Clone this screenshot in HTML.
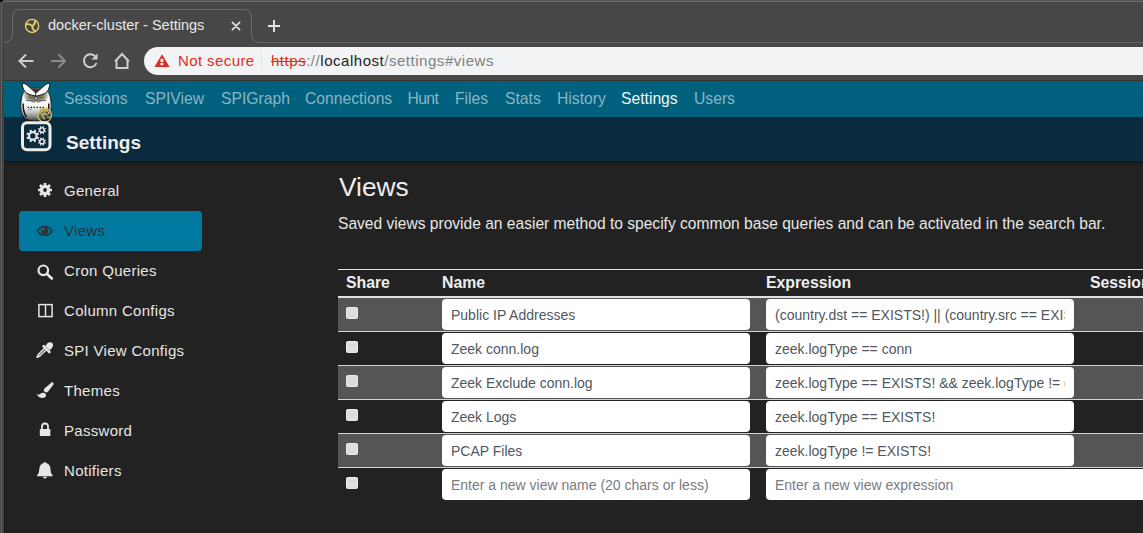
<!DOCTYPE html>
<html><head><meta charset="utf-8">
<style>
*{box-sizing:border-box}
html,body{margin:0;padding:0;width:1143px;height:533px;overflow:hidden;background:#222;font-family:"Liberation Sans",sans-serif}
.a{position:absolute}
#chrome{left:0;top:0;width:1143px;height:81px;background:#474747}
#page{left:4px;top:81px;width:1139px;height:452px;background:#222}
.nav{top:89.5px;font-size:15.7px;color:#8ab5c3;line-height:18px;white-space:nowrap}
.side{font-size:15px;letter-spacing:0.3px;color:#e6e6e6;line-height:17px;white-space:nowrap}
.th{top:274.4px;font-size:15.8px;font-weight:bold;color:#eee;line-height:18px;white-space:nowrap}
.row{left:338px;width:805px;height:33px}
.inp{background:#fff;border-radius:4px;height:31px;font-size:14px;color:#50575e;line-height:33.5px;padding-left:9px;white-space:nowrap;overflow:hidden}
.cb{width:12px;height:12px;background:#dddddd;border:1px solid #ebebeb;border-radius:1.5px;left:346px}
.ct{font-size:14px;white-space:nowrap;line-height:16px}
</style></head><body>
<div id="chrome" class="a">
  <!-- frame borders -->
  <div class="a" style="left:0;top:0;width:1143px;height:1px;background:#555"></div>
  <div class="a" style="left:3px;top:1px;width:1140px;height:1px;background:#6a6a6a"></div>
  <div class="a" style="left:0;top:0;width:3px;height:1px;background:#000"></div>
  <div class="a" style="left:0;top:0;width:1px;height:3px;background:#000"></div>
  <div class="a" style="left:1px;top:1px;width:1px;height:1px;background:#222"></div>
  <div class="a" style="left:2px;top:1px;width:1px;height:1px;background:#4a4a4a"></div>
  <div class="a" style="left:2px;top:2px;width:1px;height:1px;background:#5e5e5e"></div>
  <!-- tab strip bottom separator -->
  <div class="a" style="left:259px;top:42px;width:884px;height:1px;background:#666"></div>
  <!-- active tab -->
  <svg class="a" style="left:0;top:0" width="300" height="44">
    <path d="M4 42.5 Q12.5 42 12.5 34 L12.5 17 Q12.5 9.5 20 9.5 L243.5 9.5 Q251.5 9.5 251.5 17 L251.5 34 Q251.5 42 259.5 42.5" fill="#474747" stroke="#6b6b6b" stroke-width="1"/>
    <rect x="13" y="41" width="238" height="3" fill="#474747"/>
    <!-- favicon -->
    <g transform="translate(32.1,25.9)" fill="none" stroke="#e3d168" stroke-width="1.3">
      <circle r="6.6"/>
      <path d="M0 0.3 Q2.8 -1.2 3.2 -5.8 M-0.3 0 Q-2.4 -2.6 -6.2 -1.4 M0.2 0.2 Q0 3.6 3.6 5.4" stroke-width="1.9"/>
    </g>
    <!-- close x -->
    <path d="M232.4 22.4 L239.6 29.6 M239.6 22.4 L232.4 29.6" stroke="#dcdcdc" stroke-width="1.8" stroke-linecap="round"/>
    <!-- plus -->
    <path d="M274 20 V32 M268 26 H280" stroke="#e4e4e4" stroke-width="1.9"/>
  </svg>
  <div class="a" style="left:48px;top:17px;font-size:14.5px;color:#e8e8e8;line-height:17px;white-space:nowrap">docker-cluster - Settings</div>
  <!-- toolbar icons -->
  <svg class="a" style="left:0;top:43px" width="145" height="37">
    <g fill="none" stroke-width="2" stroke-linecap="butt">
      <path d="M33.5 18 H20 M26 11.5 L19.5 18 L26 24.5" stroke="#cfcfcf"/>
      <path d="M51 18 H64.5 M58.5 11.5 L65 18 L58.5 24.5" stroke="#8c8c8c"/>
      <path d="M95.8 14 A6.5 6.5 0 1 0 96.5 20" stroke="#cfcfcf"/>
      <path d="M97.5 10.5 V16.5 H91.5 Z" fill="#cfcfcf" stroke="none"/>
      <path d="M115 18.5 L122 11 L129 18.5 M116.5 17 V25 H127.5 V17" stroke="#cfcfcf"/>
    </g>
  </svg>
  <!-- url bar -->
  <div class="a" style="left:144px;top:47px;width:1100px;height:28px;background:#f1f3f4;border-radius:14px"></div>
  <svg class="a" style="left:150px;top:50px" width="30" height="22">
    <path d="M12 4.3 L19.6 17 H4.4 Z" fill="#d93025"/>
    <rect x="10.6" y="8.8" width="2.7" height="3.2" fill="#fff"/>
    <rect x="10.6" y="12.9" width="2.7" height="2.3" fill="#fff"/>
  </svg>
  <div class="a ct" style="left:178px;top:53px;color:#d93025;font-size:15px;letter-spacing:0.4px">Not secure</div>
  <div class="a" style="left:261px;top:54px;width:1px;height:15px;background:#dfe1e3"></div>
  <div class="a ct" style="left:271px;top:53px;font-size:15px;color:#7d8185;letter-spacing:0.53px"><span style="color:#d93025;text-decoration:line-through">https</span>://<span style="color:#202124">localhost</span>/settings#views</div>
  <!-- bottom dark line and left frame -->
  <div class="a" style="left:3px;top:80px;width:1140px;height:1px;background:#37332f"></div>
</div>
<!-- left frame border full height -->
<div class="a" style="left:0;top:2px;width:1px;height:531px;background:#4a4a4a"></div>
<div class="a" style="left:1px;top:3px;width:1px;height:530px;background:#606060"></div>
<div class="a" style="left:2px;top:43px;width:2px;height:490px;background:#414141"></div>
<div class="a" style="left:3px;top:81px;width:1px;height:452px;background:#444"></div>
<div class="a" style="left:4px;top:162px;width:1px;height:371px;background:#1c1c1c"></div>

<!-- nav bar -->
<div class="a" style="left:4px;top:81px;width:1139px;height:36px;background:#00607e"></div>
<div class="a" style="left:4px;top:117px;width:1139px;height:44px;background:#0a2a3e"></div>
<div class="a" style="left:4px;top:161px;width:1139px;height:6px;background:linear-gradient(#141414,#1a1a1a 30%,#202020 75%,#222)"></div>

<div class="a nav" style="left:64px">Sessions</div>
<div class="a nav" style="left:145px">SPIView</div>
<div class="a nav" style="left:221px">SPIGraph</div>
<div class="a nav" style="left:305px">Connections</div>
<div class="a nav" style="left:407.5px;letter-spacing:-0.6px">Hunt</div>
<div class="a nav" style="left:455px">Files</div>
<div class="a nav" style="left:505px">Stats</div>
<div class="a nav" style="left:557px">History</div>
<div class="a nav" style="left:621px;color:#eef4f6">Settings</div>
<div class="a nav" style="left:694px">Users</div>

<!-- owl logo -->
<svg class="a" style="left:16px;top:80px" width="40" height="45" viewBox="0 0 40 45">
  <defs>
    <linearGradient id="og" x1="0" y1="10" x2="0" y2="42" gradientUnits="userSpaceOnUse">
      <stop offset="0" stop-color="#ffffff"/><stop offset="0.5" stop-color="#f8f8f8"/><stop offset="0.7" stop-color="#c4c4c4"/><stop offset="0.88" stop-color="#707070"/><stop offset="1" stop-color="#222"/>
    </linearGradient>
    <radialGradient id="fg" cx="20" cy="14" r="13" gradientUnits="userSpaceOnUse">
      <stop offset="0" stop-color="#505050"/><stop offset="0.6" stop-color="#8a8a8a"/><stop offset="0.85" stop-color="#a0a0a0" stop-opacity="0.7"/><stop offset="1" stop-color="#bbb" stop-opacity="0"/>
    </radialGradient>
  </defs>
  <path d="M20 8 Q32 8 34 16 Q36.5 27 34 34 Q31 41.5 20 42 Q9 41.5 6 34 Q3.5 27 6 16 Q8 8 20 8 Z" fill="url(#og)" stroke="#151515" stroke-width="0.9"/>
  <path d="M8 10 Q20 6 32 10 Q34 15 33 19 Q27 21.5 20 22 Q13 21.5 7 19 Q6 15 8 10 Z" fill="url(#fg)"/>
  <path d="M9 9.5 Q20 7 31 9.5 L20 14 Z" fill="#3a3a3a"/>
  <path d="M7.2 23.5 Q6.5 31 10.5 37" stroke="#111" stroke-width="1.5" fill="none"/>
  <path d="M32.8 23.5 Q33.5 31 29.5 37" stroke="#111" stroke-width="1.5" fill="none"/>
  <path d="M6 3 Q9 3.5 11 5 L20.8 13.8 L20 16.2 Q14 15 10.5 13 Q7 11 6 3 Z" fill="#fbfbfb" stroke="#111" stroke-width="0.9" stroke-linejoin="round"/>
  <path d="M34 3 Q31 3.5 29 5 L19.2 13.8 L20 16.2 Q26 15 29.5 13 Q33 11 34 3 Z" fill="#fbfbfb" stroke="#111" stroke-width="0.9" stroke-linejoin="round"/>
  <ellipse cx="14.4" cy="16.3" rx="1.7" ry="1.3" fill="#a29c1c" stroke="#222" stroke-width="0.5"/>
  <ellipse cx="25.9" cy="16.3" rx="1.7" ry="1.3" fill="#a29c1c" stroke="#222" stroke-width="0.5"/>
  <ellipse cx="20" cy="18.5" rx="1.1" ry="1.9" fill="#fff" stroke="#111" stroke-width="0.7"/>
  <path d="M10 20.5 Q15 20 18.5 22.5 M21.5 22.5 Q25 20 30 20.5" stroke="#444" stroke-width="0.8" fill="none"/>
  <path d="M11.5 27.4 H28.5" stroke="#222" stroke-width="1.3" stroke-dasharray="1.5 1.5" fill="none"/>
  <path d="M12 30 L16 29 M24 29 L28 30" stroke="#777" stroke-width="0.7" fill="none"/>
  <path d="M11.5 40 Q20 43.5 28.5 40" stroke="#111" stroke-width="1.8" fill="none"/>
  <circle cx="28.6" cy="35.3" r="6.8" fill="rgba(40,50,45,0.45)" stroke="#d8c466" stroke-width="1.3"/>
  <path d="M23.5 34 Q25 30.5 29 30.3 Q32 30.8 33 33 Q31 33.5 30.5 35 Q28 33 26 34.5 Q27 37.5 29 39.5 M31 37 Q33 38 34.5 36.5" stroke="#d3c060" stroke-width="1.1" fill="none"/>
</svg>
<!-- settings icon -->
<svg class="a" style="left:20px;top:121px" width="32" height="31" viewBox="0 0 32 31">
  <rect x="2.5" y="1.7" width="27.5" height="27" rx="4.5" fill="#0a2a3e" stroke="#ecebe8" stroke-width="3"/>
  <path fill-rule="evenodd" fill="#e8e6e2" d="M17.60 14.90 L17.53 15.74 L19.21 16.47 L18.44 18.33 L16.74 17.64 L16.19 18.29 L15.54 18.84 L16.23 20.54 L14.37 21.31 L13.64 19.63 L12.80 19.70 L11.96 19.63 L11.23 21.31 L9.37 20.54 L10.06 18.84 L9.41 18.29 L8.86 17.64 L7.16 18.33 L6.39 16.47 L8.07 15.74 L8.00 14.90 L8.07 14.06 L6.39 13.33 L7.16 11.47 L8.86 12.16 L9.41 11.51 L10.06 10.96 L9.37 9.26 L11.23 8.49 L11.96 10.17 L12.80 10.10 L13.64 10.17 L14.37 8.49 L16.23 9.26 L15.54 10.96 L16.19 11.51 L16.74 12.16 L18.44 11.47 L19.21 13.33 L17.53 14.06 Z M15.50 14.90 A2.70 2.70 0 1 0 10.10 14.90 A2.70 2.70 0 1 0 15.50 14.90 Z"/>
  <path fill-rule="evenodd" fill="#e8e6e2" d="M25.00 9.10 L24.95 9.63 L26.08 10.10 L25.59 11.28 L24.46 10.82 L24.12 11.22 L23.72 11.56 L24.18 12.69 L23.00 13.18 L22.53 12.05 L22.00 12.10 L21.47 12.05 L21.00 13.18 L19.82 12.69 L20.28 11.56 L19.88 11.22 L19.54 10.82 L18.41 11.28 L17.92 10.10 L19.05 9.63 L19.00 9.10 L19.05 8.57 L17.92 8.10 L18.41 6.92 L19.54 7.38 L19.88 6.98 L20.28 6.64 L19.82 5.51 L21.00 5.02 L21.47 6.15 L22.00 6.10 L22.53 6.15 L23.00 5.02 L24.18 5.51 L23.72 6.64 L24.12 6.98 L24.46 7.38 L25.59 6.92 L26.08 8.10 L24.95 8.57 Z M23.50 9.10 A1.50 1.50 0 1 0 20.50 9.10 A1.50 1.50 0 1 0 23.50 9.10 Z"/>
  <path fill-rule="evenodd" fill="#e8e6e2" d="M25.00 20.60 L24.95 21.13 L26.08 21.60 L25.59 22.78 L24.46 22.32 L24.12 22.72 L23.72 23.06 L24.18 24.19 L23.00 24.68 L22.53 23.55 L22.00 23.60 L21.47 23.55 L21.00 24.68 L19.82 24.19 L20.28 23.06 L19.88 22.72 L19.54 22.32 L18.41 22.78 L17.92 21.60 L19.05 21.13 L19.00 20.60 L19.05 20.07 L17.92 19.60 L18.41 18.42 L19.54 18.88 L19.88 18.48 L20.28 18.14 L19.82 17.01 L21.00 16.52 L21.47 17.65 L22.00 17.60 L22.53 17.65 L23.00 16.52 L24.18 17.01 L23.72 18.14 L24.12 18.48 L24.46 18.88 L25.59 18.42 L26.08 19.60 L24.95 20.07 Z M23.50 20.60 A1.50 1.50 0 1 0 20.50 20.60 A1.50 1.50 0 1 0 23.50 20.60 Z"/>
</svg>
<div class="a" style="left:66px;top:132px;font-size:19px;font-weight:bold;color:#eee;line-height:21px">Settings</div>

<!-- sidebar -->
<div class="a" style="left:19px;top:211px;width:183px;height:40px;background:#0079a0;border-radius:4px"></div>
<div class="a side" style="left:64px;top:182px">General</div>
<div class="a side" style="left:64px;top:222px;color:#2e3338">Views</div>
<div class="a side" style="left:64px;top:262px">Cron Queries</div>
<div class="a side" style="left:64px;top:302px">Column Configs</div>
<div class="a side" style="left:64px;top:342px">SPI View Configs</div>
<div class="a side" style="left:64px;top:382px">Themes</div>
<div class="a side" style="left:64px;top:422px">Password</div>
<div class="a side" style="left:64px;top:462px">Notifiers</div>

<svg class="a" style="left:30px;top:176px" width="30" height="310" viewBox="0 0 30 310">
  <!-- gear -->
  <g transform="translate(15,14)" fill="#e6e6e6">
    <circle r="5.2"/>
    <g stroke="#e6e6e6" stroke-width="2.6">
      <path d="M0 -7 V7 M-7 0 H7 M-5 -5 L5 5 M5 -5 L-5 5"/>
    </g>
    <circle r="1.9" fill="#222"/>
  </g>
  <!-- eye -->
  <g transform="translate(14.8,54.8)">
    <path d="M-7.2 0 C-4.5 -5.6 4.5 -5.6 7.2 0 C4.5 5.6 -4.5 5.6 -7.2 0 Z" fill="none" stroke="#2e3338" stroke-width="1.7"/>
    <circle r="3.5" fill="#2e3338"/>
    <circle cx="-1.5" cy="-1.6" r="1.2" fill="#2d6c86"/>
  </g>
  <!-- search -->
  <g transform="translate(0,80)" fill="none" stroke="#e6e6e6" stroke-width="2.2">
    <circle cx="13.3" cy="14.3" r="4.8"/>
    <path d="M16.8 17.8 L21.8 22.5" stroke-width="2.6" stroke-linecap="round"/>
  </g>
  <!-- columns -->
  <g transform="translate(0,120)" fill="none" stroke="#e6e6e6" stroke-width="1.5">
    <rect x="8.9" y="8.6" width="13.2" height="12"/>
    <path d="M15.5 8.6 V20.6"/>
  </g>
  <!-- eyedropper -->
  <g transform="translate(0,160)">
    <path d="M15.2 11.6 L8.4 18.5 L7 21.4 L9.9 20 L16.8 13.2" fill="none" stroke="#e6e6e6" stroke-width="1.5" stroke-linejoin="round"/>
    <circle cx="20" cy="9.3" r="3" fill="#e6e6e6"/>
    <path d="M13.6 10.2 L19.4 16" stroke="#e6e6e6" stroke-width="2.6" stroke-linecap="round"/>
    <path d="M16.5 8.5 L21 13" stroke="#e6e6e6" stroke-width="3.5"/>
  </g>
  <!-- brush -->
  <g transform="translate(0,200)" fill="#e6e6e6">
    <path d="M22.2 5.9 Q24.2 6.3 23.4 8.4 L18.2 15.4 Q16.6 17.1 14.7 16 Q13.1 14.6 14.2 12.8 Z"/>
    <path d="M6.6 17 Q7.4 19.2 9.4 18.6 Q11.2 16.4 13.5 16.7 Q16.4 17.3 16 20 Q15.3 22.1 12 22 Q7.8 21.8 6.6 17 Z"/>
  </g>
  <!-- lock -->
  <g transform="translate(0,240)">
    <path d="M12 13 V10.5 Q12 7.5 15 7.5 Q18 7.5 18 10.5 V13" fill="none" stroke="#e6e6e6" stroke-width="1.8"/>
    <rect x="9.8" y="13" width="10.6" height="7" rx="0.8" fill="#e6e6e6"/>
  </g>
  <!-- bell -->
  <g transform="translate(0,280)" fill="#e6e6e6">
    <path d="M14.9 6 Q15.8 6 16 7 Q20.5 8.2 20.5 13.5 Q20.5 17.3 22.6 19.2 L22.6 20.3 H7.1 L7.1 19.2 Q9.3 17.3 9.3 13.5 Q9.3 8.2 13.8 7 Q14 6 14.9 6Z"/>
    <path d="M12.8 20.8 Q13 22.6 14.9 22.6 Q16.8 22.6 17 20.8Z"/>
  </g>
</svg>

<!-- content -->
<div class="a" style="left:339px;top:172px;font-size:26.3px;color:#eee;line-height:30px">Views</div>
<div class="a" style="left:338px;top:214.5px;font-size:15.58px;color:#e6e6e6;line-height:18px;white-space:nowrap">Saved views provide an easier method to specify common base queries and can be activated in the search bar.</div>

<!-- table -->
<div class="a" style="left:338px;top:269px;width:805px;height:1px;background:#dee2e6"></div>
<div class="a th" style="left:346px">Share</div>
<div class="a th" style="left:442px">Name</div>
<div class="a th" style="left:766px">Expression</div>
<div class="a th" style="left:1090px">Sessions</div>
<div class="a" style="left:338px;top:296px;width:805px;height:2px;background:#dee2e6"></div>

<div class="a row" style="top:298px;background:#555"></div>
<div class="a" style="left:338px;top:331px;width:805px;height:1px;background:#d0d3d6"></div>
<div class="a row" style="top:332px"></div>
<div class="a" style="left:338px;top:365px;width:805px;height:1px;background:#d0d3d6"></div>
<div class="a row" style="top:366px;background:#555"></div>
<div class="a" style="left:338px;top:399px;width:805px;height:1px;background:#d0d3d6"></div>
<div class="a row" style="top:400px"></div>
<div class="a" style="left:338px;top:433px;width:805px;height:1px;background:#d0d3d6"></div>
<div class="a row" style="top:434px;background:#555"></div>
<div class="a" style="left:338px;top:467px;width:805px;height:1px;background:#d0d3d6"></div>

<div class="a cb" style="top:307px"></div>
<div class="a cb" style="top:341px"></div>
<div class="a cb" style="top:375px"></div>
<div class="a cb" style="top:409px"></div>
<div class="a cb" style="top:443px"></div>
<div class="a cb" style="top:477px"></div>

<div class="a inp" style="left:442px;top:299px;width:308px">Public IP Addresses</div>
<div class="a inp" style="left:442px;top:333px;width:308px">Zeek conn.log</div>
<div class="a inp" style="left:442px;top:367px;width:308px">Zeek Exclude conn.log</div>
<div class="a inp" style="left:442px;top:401px;width:308px">Zeek Logs</div>
<div class="a inp" style="left:442px;top:435px;width:308px">PCAP Files</div>
<div class="a inp" style="left:442px;top:469px;width:308px;color:#777c81">Enter a new view name (20 chars or less)</div>

<div class="a inp" style="left:766px;top:299px;width:308px"><div style="width:290px;overflow:hidden">(country.dst == EXISTS!) || (country.src == EXISTS!)</div></div>
<div class="a inp" style="left:766px;top:333px;width:308px">zeek.logType == conn</div>
<div class="a inp" style="left:766px;top:367px;width:308px"><div style="width:290px;overflow:hidden">zeek.logType == EXISTS! &amp;&amp; zeek.logType != conn</div></div>
<div class="a inp" style="left:766px;top:401px;width:308px">zeek.logType == EXISTS!</div>
<div class="a inp" style="left:766px;top:435px;width:308px">zeek.logType != EXISTS!</div>
<div class="a inp" style="left:766px;top:469px;width:400px;color:#777c81">Enter a new view expression</div>

</body></html>
